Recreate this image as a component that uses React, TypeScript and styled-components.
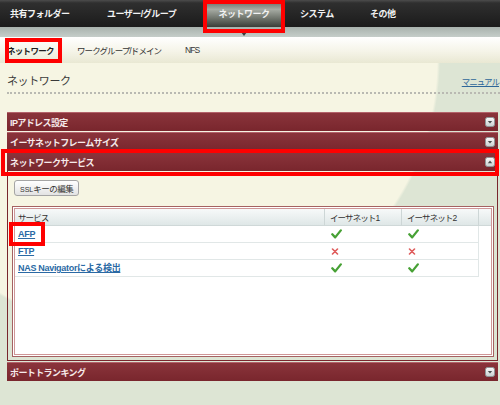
import React from 'react';
import styled, { createGlobalStyle, css } from 'styled-components';

const GlobalStyle = createGlobalStyle`
  html, body {
    margin: 0;
    padding: 0;
  }
  body {
    width: 500px;
    height: 405px;
    overflow: hidden;
    font-family: "Liberation Sans", "Noto Sans CJK JP", sans-serif;
    background: #dde5d4 radial-gradient(ellipse 290px 275px at 150px 60px, #f6f5e3 99%, rgba(246, 245, 227, 0) 100%);
  }
`;

// red annotation frame drawn over an element
const redBox = (t: number, r: number, b: number, l: number) => css`
  &::after {
    content: '';
    position: absolute;
    top: ${t}px;
    right: ${r}px;
    bottom: ${b}px;
    left: ${l}px;
    border: 4px solid #f00;
    pointer-events: none;
    z-index: 5;
  }
`;

const TopNav = styled.nav`
  display: flex;
  height: 27px;
  background: linear-gradient(#4c4c4c 0, #2f2f2f 3px, #1b1b1b 100%);
`;

const NavItem = styled.div<{ $w: number; $pl: number; $active?: boolean }>`
  position: relative;
  box-sizing: border-box;
  width: ${(p) => p.$w}px;
  padding-left: ${(p) => p.$pl}px;
  display: flex;
  align-items: center;
  color: #f2f2f2;
  font-size: 9px;
  font-weight: bold;
  letter-spacing: -0.5px;
  white-space: nowrap;

  ${(p) =>
    p.$active &&
    css`
      justify-content: center;
      padding-left: 0;
      background: linear-gradient(#5b6059, #a6aba3 35%, #6c7169 70%, #3a3d38);
      ${redBox(0, 0, -6, 0)}
      &::before {
        content: '';
        position: absolute;
        left: 50%;
        bottom: -12px;
        margin-left: -3px;
        border: 3px solid transparent;
        border-top: 4px solid #3c3c3c;
      }
    `}
`;

const Strip = styled.div`
  height: 10px;
  background: linear-gradient(#a8b2ad, #c5cdc9);
`;

const SubNav = styled.div`
  display: flex;
  height: 26px;
  background: linear-gradient(#ffffff, #f5f4e8 55%, #e9e8d3);
`;

const SubItem = styled.div<{ $w: number; $pl: number; $active?: boolean }>`
  position: relative;
  box-sizing: border-box;
  width: ${(p) => p.$w}px;
  padding-left: ${(p) => p.$pl}px;
  display: flex;
  align-items: center;
  color: #333;
  font-size: 8.5px;
  letter-spacing: -0.9px;
  white-space: nowrap;

  ${(p) =>
    p.$active &&
    css`
      font-weight: bold;
      color: #1e1e1e;
      letter-spacing: -0.7px;
      ${redBox(1, 4, 0, 5)}
    `}
`;

const TitleRow = styled.div`
  display: flex;
  justify-content: space-between;
  align-items: center;
  height: 31px;
  padding: 5px 1px 0 0;
  box-sizing: border-box;
  margin: 0 0 0 7px;
  border-bottom: 2px dotted #b9b9b2;
`;

const Title = styled.h1`
  margin: 0;
  font-size: 11px;
  font-weight: normal;
  color: #3a3a3a;
  letter-spacing: -0.4px;
`;

const ManualLink = styled.a`
  align-self: flex-end;
  margin-bottom: 5px;
  font-size: 8.5px;
  letter-spacing: -1px;
  color: #2f6799;
  text-decoration: underline;
  white-space: nowrap;
`;

const Panels = styled.div`
  margin: 18px 2px 0 7px;
`;

const PanelHeader = styled.div<{ $marked?: boolean }>`
  position: relative;
  box-sizing: border-box;
  height: 19px;
  margin-top: 1px;
  padding: 0 3px;
  display: flex;
  align-items: center;
  justify-content: space-between;
  background: linear-gradient(#8a343b, #79262d);
  border-top: 1px solid #b3626a;
  color: #f6eaea;
  font-size: 9px;
  font-weight: bold;
  letter-spacing: -0.6px;
  white-space: nowrap;

  ${(p) => p.$marked && redBox(-4, -1, -5, -6)}
`;

const PanelBody = styled.div`
  padding: 7px 3px 3px 4px;
  border: 1px solid #79262d;
  border-top: none;
`;

const EditButton = styled.button`
  margin-left: 2px;
  height: 16px;
  padding: 0 5px;
  border: 1px solid #a5a5a5;
  border-radius: 3px;
  background: linear-gradient(#ffffff, #e3e3e3);
  font-family: inherit;
  font-size: 8.5px;
  letter-spacing: -0.5px;
  color: #333;

  small {
    font-size: 7px;
    letter-spacing: 0;
  }
`;

const TableBox = styled.div`
  margin-top: 10px;
  height: 151px;
  box-sizing: border-box;
  padding: 1px;
  border: 1px solid #a56262;
  background: #fff;
`;

const TableInner = styled.div`
  height: 100%;
  box-sizing: border-box;
  border: 1px solid #cf9797;
  background: #fff;
`;

const Grid = styled.div`
  display: grid;
  grid-template-columns: 310px 77px 77px 1fr;
`;

const HeadCell = styled.div<{ $pl: number; $last?: boolean }>`
  box-sizing: border-box;
  height: 17px;
  display: flex;
  align-items: center;
  padding-left: ${(p) => p.$pl}px;
  background: linear-gradient(#f7f9f9, #dfe7e7);
  border-bottom: 1px solid #cfd8d8;
  border-right: ${(p) => (p.$last ? 'none' : '1px solid #cdd6d6')};
  color: #333;
  font-size: 8.5px;
  letter-spacing: -0.9px;
  white-space: nowrap;
`;

const Cell = styled.div<{ $pl: number; $edge?: boolean; $blank?: boolean }>`
  box-sizing: border-box;
  height: 17px;
  display: flex;
  align-items: center;
  padding-left: ${(p) => p.$pl}px;
  border-bottom: ${(p) => (p.$blank ? 'none' : '1px solid #e1e7e7')};
  border-right: ${(p) => (p.$edge ? '1px solid #e1e7e7' : 'none')};
`;

const ServiceLink = styled.a<{ $marked?: boolean }>`
  position: relative;
  display: inline-block;
  line-height: 12px;
  color: #2a69a4;
  font-size: 9px;
  font-weight: bold;
  letter-spacing: -0.3px;
  text-decoration: underline;
  white-space: nowrap;

  ${(p) => p.$marked && redBox(-6, -10, -6, -9)}
`;

const Toggle = ({ up }: { up?: boolean }) => (
  <svg width="10" height="10" viewBox="0 0 10 10">
    <defs>
      <linearGradient id="tg" x1="0" y1="0" x2="0" y2="1">
        <stop offset="0" stopColor="#fbfbfb" />
        <stop offset="1" stopColor="#c8cfd0" />
      </linearGradient>
    </defs>
    <rect x="0.5" y="0.5" width="9" height="9" rx="2" fill="url(#tg)" stroke="#8d9596" />
    {up ? (
      <polygon points="2.8,6.2 7.2,6.2 5,3.6" fill="#4a4f50" />
    ) : (
      <polygon points="2.8,3.9 7.2,3.9 5,6.5" fill="#4a4f50" />
    )}
  </svg>
);

const Check = () => (
  <svg width="11" height="10" viewBox="0 0 11 10">
    <path
      d="M1.3 5.3 L4.2 8.4 L9.8 1.4"
      fill="none"
      stroke="#47a135"
      strokeWidth="2.3"
      strokeLinecap="round"
      strokeLinejoin="round"
    />
  </svg>
);

const Cross = () => (
  <svg width="8" height="7" viewBox="0 0 8 7">
    <path d="M1.5 1 L6.5 6 M6.5 1 L1.5 6" stroke="#df5b5b" strokeWidth="1.6" strokeLinecap="round" />
  </svg>
);

const navItems = [
  { label: '共有フォルダー', w: 97, pl: 10 },
  { label: 'ユーザー/グループ', w: 106, pl: 10 },
  { label: 'ネットワーク', w: 82, pl: 0, active: true },
  { label: 'システム', w: 70, pl: 15 },
  { label: 'その他', w: 60, pl: 15 },
];

const subItems = [
  { label: 'ネットワーク', w: 66, pl: 7, active: true },
  { label: 'ワークグループ/ドメイン', w: 109, pl: 11 },
  { label: 'NFS', w: 60, pl: 10 },
];

const services = [
  { name: 'AFP', eth1: true, eth2: true, marked: true },
  { name: 'FTP', eth1: false, eth2: false },
  { name: 'NAS Navigatorによる検出', eth1: true, eth2: true },
];

export default function App() {
  return (
    <>
      <GlobalStyle />
      <TopNav>
        {navItems.map((n) => (
          <NavItem key={n.label} $w={n.w} $pl={n.pl} $active={n.active}>
            {n.label}
          </NavItem>
        ))}
      </TopNav>
      <Strip />
      <SubNav>
        {subItems.map((s) => (
          <SubItem key={s.label} $w={s.w} $pl={s.pl} $active={s.active}>
            {s.label}
          </SubItem>
        ))}
      </SubNav>

      <TitleRow>
        <Title>ネットワーク</Title>
        <ManualLink>マニュアル</ManualLink>
      </TitleRow>

      <Panels>
        <PanelHeader>
          IPアドレス設定
          <Toggle />
        </PanelHeader>
        <PanelHeader>
          イーサネットフレームサイズ
          <Toggle />
        </PanelHeader>
        <PanelHeader $marked>
          ネットワークサービス
          <Toggle up />
        </PanelHeader>
        <PanelBody>
          <EditButton>
            <small>SSL</small>キーの編集
          </EditButton>
          <TableBox>
            <TableInner>
              <Grid>
                <HeadCell $pl={3}>サービス</HeadCell>
                <HeadCell $pl={5}>イーサネット1</HeadCell>
                <HeadCell $pl={5}>イーサネット2</HeadCell>
                <HeadCell $pl={0} $last />
                {services.map((s) => (
                  <React.Fragment key={s.name}>
                    <Cell $pl={3}>
                      <ServiceLink $marked={s.marked}>{s.name}</ServiceLink>
                    </Cell>
                    <Cell $pl={6}>{s.eth1 ? <Check /> : <Cross />}</Cell>
                    <Cell $pl={6} $edge>
                      {s.eth2 ? <Check /> : <Cross />}
                    </Cell>
                    <Cell $pl={0} $blank />
                  </React.Fragment>
                ))}
              </Grid>
            </TableInner>
          </TableBox>
        </PanelBody>
        <PanelHeader>
          ポートトランキング
          <Toggle />
        </PanelHeader>
      </Panels>
    </>
  );
}
